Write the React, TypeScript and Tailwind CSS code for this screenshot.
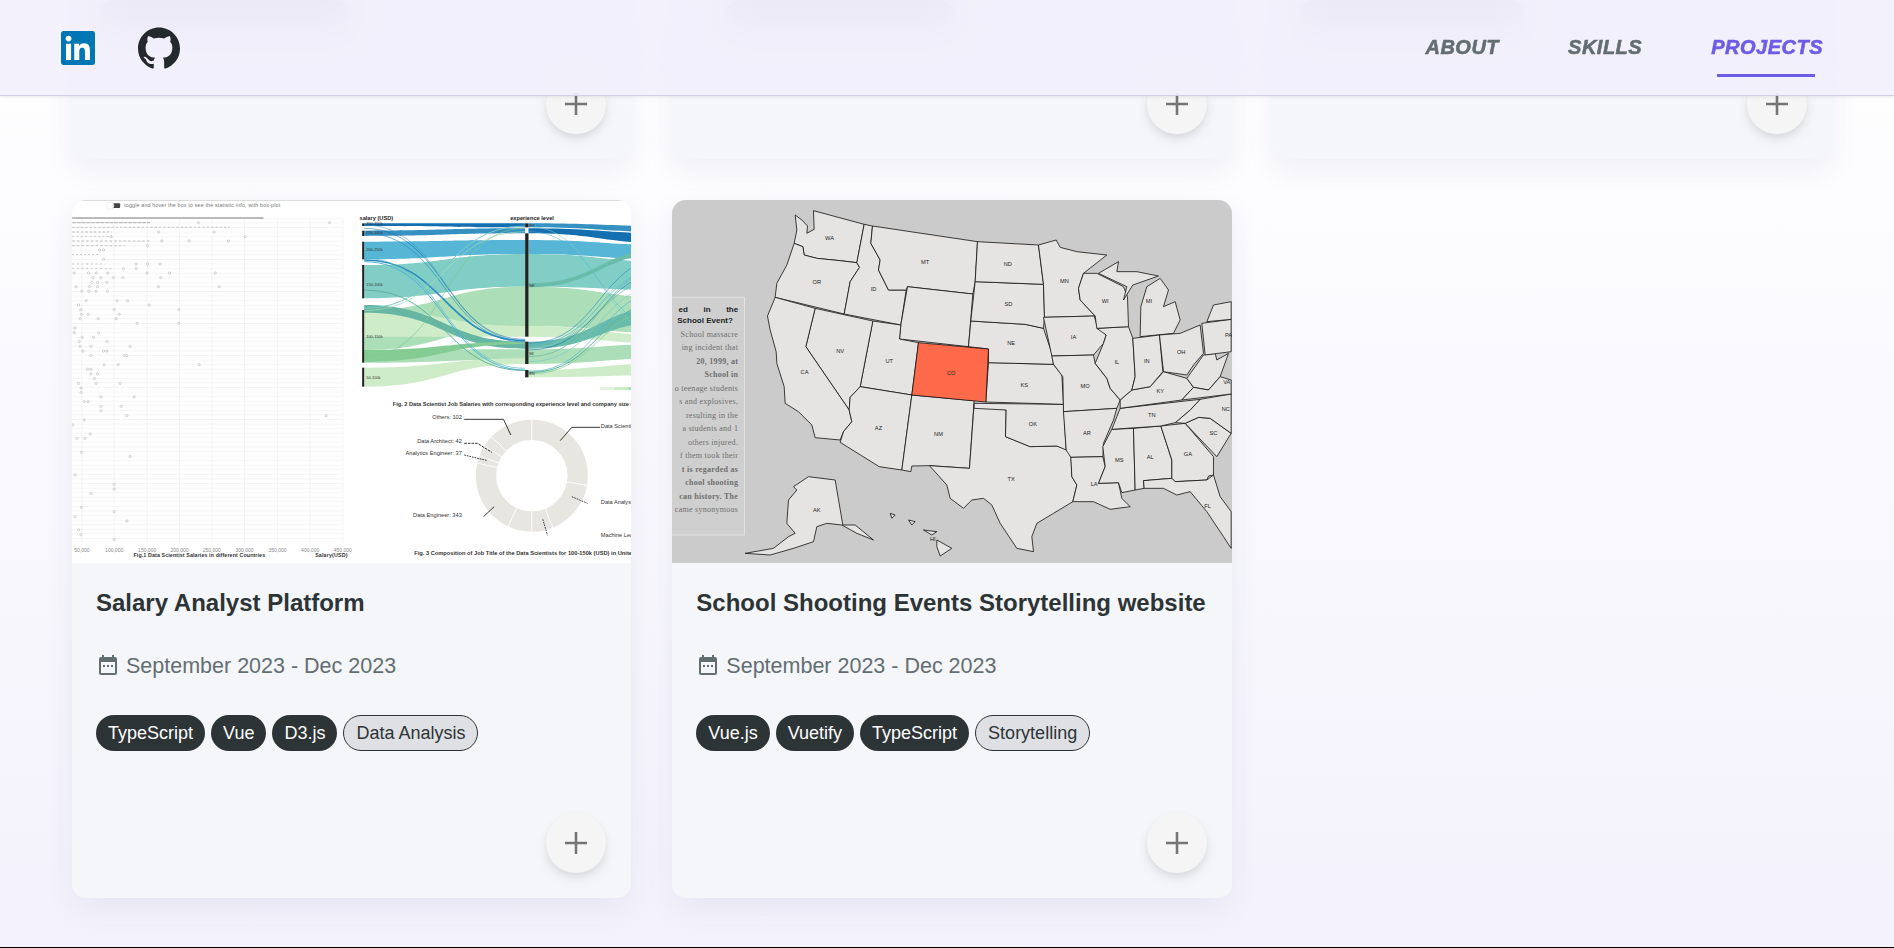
import { SiGithub, SiLinkedin } from "react-icons/si";

const sans = "'Liberation Sans', Arial, sans-serif";
const serif = "'Liberation Serif', 'Times New Roman', serif";

// chart + map are drawn in "crop units": 3 units per page px, so viewBox is 559x363 * 3
const ribbon = (x0: number, a0: number, b0: number, x1: number, a1: number, b1: number) => {
  const m = (x0 + x1) / 2;
  return `M${x0} ${a0}C${m} ${a0} ${m} ${a1} ${x1} ${a1}L${x1} ${b1}C${m} ${b1} ${m} ${b0} ${x0} ${b0}Z`;
};
const curve = (x0: number, y0: number, x1: number, y1: number) => {
  const m = (x0 + x1) / 2;
  return `M${x0} ${y0}C${m} ${y0} ${m} ${y1} ${x1} ${y1}`;
};

const leftFlows: [number, number, number, number, string][] = [
  [100, 108, 100, 112, "#0868ac"],
  [122, 138, 115, 130, "#2b8cbe"],
  [155, 208, 150, 192, "#4eb3d3"],
  [225, 325, 192, 290, "#7bccc4"],
  [360, 480, 290, 408, "#a8ddb5"],
  [480, 518, 478, 508, "#a8ddb5"],
  [533, 590, 505, 522, "#ccebc5"],
  [360, 440, 408, 440, "#ccebc5"],
  [345, 368, 455, 476, "#5fb39f"],
  [480, 515, 455, 462, "#7fc98f"],
];

const rightFlows: [number, number, number, number, string][] = [
  [100, 112, 108, 126, "#2b8cbe"],
  [115, 130, 130, 160, "#0868ac"],
  [150, 192, 165, 208, "#4eb3d3"],
  [192, 290, 215, 300, "#7bccc4"],
  [290, 408, 322, 430, "#a8ddb5"],
  [408, 440, 436, 460, "#ccebc5"],
  [455, 476, 348, 395, "#62b8a6"],
  [478, 522, 462, 505, "#a8ddb5"],
  [540, 562, 520, 556, "#ccebc5"],
  [280, 292, 175, 190, "#62b8a6"],
];

// thin strands: start y, end y, colour, width
const leftLines: [number, number, string, number][] = [
  [105, 452, "#2b8cbe", 1.5],
  [115, 448, "#0868ac", 1.5],
  [130, 456, "#2b8cbe", 2],
  [210, 452, "#2b8cbe", 5],
  [215, 540, "#4eb3d3", 3],
  [300, 542, "#5fb39f", 3],
  [205, 535, "#4eb3d3", 2],
  [355, 108, "#7bccc4", 3],
  [362, 125, "#a8ddb5", 2],
  [500, 115, "#7fc98f", 2],
];

const rightLines: [number, number, string, number][] = [
  [460, 200, "#2b8cbe", 2],
  [465, 230, "#4eb3d3", 2],
  [470, 260, "#5fb39f", 2],
  [475, 215, "#7bccc4", 2],
  [480, 245, "#0868ac", 1.5],
  [500, 230, "#5fb39f", 2],
  [515, 280, "#7bccc4", 2],
  [545, 300, "#4eb3d3", 2],
  [548, 330, "#5fb39f", 3],
  [552, 350, "#7fc98f", 2],
  [110, 440, "#7bccc4", 1.5],
  [125, 420, "#4eb3d3", 1.5],
];

const gridX = [65, 162, 261, 358, 455, 553, 652, 750, 848];
const rowY = Array.from({ length: 71 }, (_, i) => 85 + i * 13.72);
const scatter: [number, number][] = [
  [415, 98], [808, 98], [295, 126], [462, 126], [555, 140], [153, 140], [505, 153], [387, 153], [305, 153], [262, 167],
  [130, 180], [118, 180], [130, 208], [228, 222], [262, 222], [300, 222], [228, 236], [190, 236], [42, 249], [85, 249],
  [108, 249], [143, 249], [260, 249], [328, 249], [465, 249], [98, 263], [122, 263], [160, 263], [188, 263], [302, 263],
  [95, 277], [112, 277], [140, 277], [48, 290], [88, 290], [112, 290], [295, 290], [477, 290], [65, 304], [86, 304],
  [108, 304], [142, 304], [78, 332], [170, 332], [202, 332], [55, 345], [267, 345], [62, 359], [162, 359], [356, 359],
  [64, 373], [84, 373], [177, 373], [60, 386], [114, 386], [168, 386], [231, 400], [356, 400], [44, 414], [42, 428],
  [115, 428], [66, 442], [100, 442], [57, 455], [141, 455], [60, 469], [92, 469], [210, 469], [68, 483], [130, 483],
  [140, 483], [92, 497], [192, 497], [200, 497], [132, 524], [174, 524], [417, 524], [82, 538], [92, 538], [92, 552],
  [112, 552], [103, 566], [55, 580], [108, 580], [180, 580], [63, 594], [63, 607], [122, 621], [222, 621], [72, 635],
  [84, 635], [122, 649], [183, 649], [122, 662], [200, 677], [798, 677], [72, 690], [38, 705], [90, 732], [50, 745],
  [74, 745], [64, 787], [210, 800], [45, 855], [162, 883], [162, 897], [92, 911], [64, 952], [162, 965], [45, 980],
  [200, 993], [55, 1020], [62, 1034], [162, 1048],
];

const donutAngles = [0, 100, 158, 180, 205, 283, 291, 302, 314];
const rad = (d: number) => ((d - 90) * Math.PI) / 180;
const polar = (r: number, d: number) => [845 + 570 + r * Math.cos(rad(d)), 857 + r * Math.sin(rad(d))];

function SalaryImage() {
  const off = 870;
  return (
    <svg viewBox="36 30 1677 1089" className="block w-full h-full bg-white" fontFamily={sans}>
      <line x1="36" y1="31" x2="1713" y2="31" stroke="#dcdcdc" strokeWidth="4" />
      <rect x="158" y="40" width="22" height="14" rx="3" fill="#444" />
      <circle cx="150" cy="47" r="11" fill="#fff" stroke="#e2e2e2" strokeWidth="2" />
      <text x="192" y="52" fontSize="16" fill="#777" textLength="468">toggle and hover the box to see the statistic info, with box-plot</text>

      {rowY.map((y) => (
        <line key={y} x1="36" x2="848" y1={y} y2={y} stroke="#f0f0f0" strokeWidth="2" />
      ))}
      {gridX.map((x) => (
        <line key={x} x1={x} x2={x} y1="85" y2="1060" stroke="#f0f0f0" strokeWidth="2" />
      ))}
      <line x1="36" x2="610" y1="84" y2="84" stroke="#a6a6a6" strokeWidth="4" />
      <line x1="36" x2="270" y1="98" y2="98" stroke="#b0b0b0" strokeWidth="3" strokeDasharray="12 2" />
      <line x1="36" x2="510" y1="112" y2="112" stroke="#c4c4c4" strokeWidth="3" strokeDasharray="8 5" />
      <line x1="36" x2="155" y1="126" y2="126" stroke="#bcbcbc" strokeWidth="3" strokeDasharray="8 5" />
      <line x1="36" x2="155" y1="140" y2="140" stroke="#cacaca" strokeWidth="3" strokeDasharray="6 7" />
      <line x1="36" x2="270" y1="153" y2="153" stroke="#c0c0c0" strokeWidth="3" strokeDasharray="8 6" />
      <line x1="36" x2="195" y1="167" y2="167" stroke="#c4c4c4" strokeWidth="3" strokeDasharray="8 6" />
      <line x1="36" x2="118" y1="194" y2="194" stroke="#c0c0c0" strokeWidth="3" strokeDasharray="5 7" />
      <line x1="36" x2="135" y1="222" y2="222" stroke="#c8c8c8" strokeWidth="3" strokeDasharray="6 8" />
      <line x1="36" x2="160" y1="236" y2="236" stroke="#c8c8c8" strokeWidth="3" strokeDasharray="6 8" />
      {scatter.map(([x, y]) => (
        <circle key={`${x}-${y}`} cx={x} cy={y} r="3.5" fill="none" stroke="#ababab" strokeWidth="1.5" />
      ))}
      {["50,000", "100,000", "150,000", "200,000", "250,000", "300,000", "350,000", "400,000", "450,000"].map((t, i) => (
        <text key={t} x={gridX[i]} y="1086" fontSize="15" fill="#888" textAnchor="middle">{t}</text>
      ))}
      <text x="220" y="1102" fontSize="16" fontWeight="700" fill="#333" textLength="395">Fig.1 Data Scientist Salaries in different Countries</text>
      <text x="765" y="1102" fontSize="16" fontWeight="700" fill="#333" textLength="97">Salary(USD)</text>

      <g transform={`translate(${off} 0)`}>
        <text x="28" y="90" fontSize="17" fontWeight="700" fill="#222">salary (USD)</text>
        <text x="480" y="90" fontSize="17" fontWeight="700" fill="#222">experience level</text>
        <g opacity="0.95">
          {leftFlows.map(([a0, b0, a1, b1, c]) => (
            <path key={`l${a0}${a1}`} d={ribbon(42, a0, b0, 525, a1, b1)} fill={c} />
          ))}
          {rightFlows.map(([a0, b0, a1, b1, c]) => (
            <path key={`r${a0}${a1}`} d={ribbon(535, a0, b0, 960, a1, b1)} fill={c} />
          ))}
        </g>
        <g fill="none">
          {leftLines.map(([a, b, c, w]) => (
            <path key={`${a}-${b}`} d={curve(42, a, 525, b)} stroke={c} strokeWidth={w} />
          ))}
          {rightLines.map(([a, b, c, w]) => (
            <path key={`${a}-${b}`} d={curve(535, a, 960, b)} stroke={c} strokeWidth={w} />
          ))}
        </g>
        {[[100, 108], [122, 138], [155, 208], [225, 325], [360, 518], [533, 590]].map(([a, b]) => (
          <rect key={a} x="36" y={a} width="6" height={b - a} fill="#222" />
        ))}
        {[[100, 112], [130, 440], [455, 522], [540, 562]].map(([a, b]) => (
          <rect key={a} x="525" y={a} width="10" height={b - a} fill="#222" />
        ))}
        <g fontSize="12" fill="#333">
          <text x="48" y="106">300-350k</text>
          <text x="48" y="132">250-300k</text>
          <text x="48" y="184">200-250k</text>
          <text x="48" y="287">150-200k</text>
          <text x="48" y="443">100-150k</text>
          <text x="48" y="566">50-100k</text>
          <text x="537" y="110">EX</text>
          <text x="537" y="290">SE</text>
          <text x="537" y="494">MI</text>
          <text x="537" y="556">EN</text>
        </g>
        <rect x="750" y="591" width="42" height="9" fill="#e0f3db" />
        <rect x="792" y="591" width="42" height="9" fill="#ccebc5" />
        <rect x="834" y="591" width="42" height="9" fill="#a8ddb5" />
        <text x="128" y="648" fontSize="17" fontWeight="700" fill="#333" textLength="760">Fig. 2 Data Scientist Job Salaries with corresponding experience level and company size (USD)</text>
      </g>

      {/* donut */}
      <circle cx="1415" cy="857" r="137.5" fill="none" stroke="#e8e6e1" strokeWidth="61" />
      {donutAngles.map((d) => {
        const [x1, y1] = polar(105, d);
        const [x2, y2] = polar(170, d);
        return <line key={d} x1={x1} y1={y1} x2={x2} y2={y2} stroke="#fff" strokeWidth="3" />;
      })}
      <g fill="none" stroke="#111" strokeWidth="2.5">
        <path d="M1212 688H1330L1352 735" />
        <path d="M1212 760H1252L1295 787" strokeDasharray="8 3" />
        <path d="M1212 795L1282 812" strokeDasharray="5 3" />
        <path d="M1620 712H1535L1500 752" />
        <path d="M1535 920L1582 940" strokeDasharray="5 3" />
        <path d="M1448 988L1462 1036" strokeDasharray="5 3" />
        <path d="M1270 980L1302 950" />
      </g>
      <g fontSize="17" fill="#333">
        <text x="1205" y="687" textAnchor="end">Others: 102</text>
        <text x="1205" y="759" textAnchor="end">Data Architect: 42</text>
        <text x="1205" y="795" textAnchor="end">Analytics Engineer: 37</text>
        <text x="1205" y="980" textAnchor="end">Data Engineer: 343</text>
        <text x="1622" y="713">Data Scientist: 250</text>
        <text x="1622" y="941">Data Analyst: 180</text>
        <text x="1622" y="1041">Machine Learning: 80</text>
      </g>
      <text x="1062" y="1096" fontSize="17" fontWeight="700" fill="#333" textLength="720">Fig. 3 Composition of Job Title of the Data Scientists for 100-150k (USD) in United States</text>
    </svg>
  );
}

// points in crop units; anything from the right half of the map is shifted by 870
const s = (pts: string) =>
  pts
    .trim()
    .split(/\s+/)
    .map((p) => {
      const [x, y] = p.split(",").map(Number);
      return `${x + 870},${y}`;
    })
    .join(" ");

const westStates = [
  "405,75 425,90 442,108 440,130 462,118 460,62 612,103 590,218 540,212 470,205 432,195 428,170 402,160 410,120",
  "402,160 428,170 432,195 470,205 540,212 590,218 598,232 570,275 552,372 345,322 350,280 380,225",
  "612,103 637,108 632,160 660,210 655,240 685,300 738,300 722,405 552,372 570,275 598,232 590,218",
  "637,108 952,155 945,275 938,312 742,290 738,300 685,300 655,240 660,210 632,160",
  "742,290 938,312 925,470 718,447 722,405",
  "638,393 722,405 718,447 775,458 755,615 600,590",
  "465,355 638,393 600,590 570,622 567,660 437,470",
  "345,322 465,355 437,470 567,660 575,695 550,725 540,750 465,743 455,705 415,665 375,640 372,590 350,520 348,485 330,420 322,378",
  "570,622 600,590 755,615 725,840 657,830 540,757 550,725 575,695 567,660",
  "755,615 942,632 928,835 808,827 755,828 752,845 725,840",
  "400,890 445,860 525,870 548,1005 585,1005 640,1050 590,1030 545,1005 500,1000 470,1010 460,1055 400,1075 330,1095 255,1090 340,1075 385,1040 405,1030 380,1000 385,930 410,900",
  "830,1050 875,1075 840,1098 830,1070",
  "790,1020 830,1025 815,1035",
  "745,990 765,995 755,1005",
  "690,970 705,975 695,985",
];

const eastStates = [
  "72,640 168,660 166,740 240,770 320,768 362,782 365,860 380,885 368,935 310,970 260,1000 245,1040 250,1085 200,1075 150,1000 125,945 100,925 65,930 40,955 0,925 -10,885 -62,827 58,835",
  "72,640 340,643 348,780 320,768 240,770 166,740 168,660 72,655",
  "115,518 310,523 335,555 340,643 107,636",
  "62,393 225,403 280,415 305,490 310,523 115,518 115,477 55,470",
  "75,275 280,283 283,380 280,415 225,403 62,393",
  "82,155 265,165 280,283 75,275",
  "265,165 318,150 330,172 380,185 470,195 400,250 385,295 390,330 435,378 283,382 280,283",
  "280,382 432,378 440,405 468,435 460,460 430,495 305,498",
  "305,498 430,495 435,520 470,565 480,595 510,630 500,655 340,665 338,560 310,523",
  "340,665 500,655 490,690 460,760 458,800 362,802 348,780",
  "362,802 458,800 465,830 445,880 505,878 515,925 540,950 480,958 430,935 368,935 380,885 365,860",
  "485,718 550,715 555,900 515,908 505,878 445,880 465,830 458,770",
  "550,715 632,708 665,810 665,865 580,872 582,895 555,900",
  "632,708 705,700 790,800 790,855 775,858 770,870 675,875 665,865 665,810",
  "580,872 665,865 675,875 770,870 790,855 810,920 843,965 843,1075 820,1040 770,965 720,905 680,915 640,895 582,895",
  "705,700 745,682 780,685 843,730 800,800",
  "750,628 843,612 843,730 780,685 745,682 705,700 675,698 720,660",
  "510,655 750,628 720,660 675,698 632,708 485,718 500,680",
  "510,630 545,600 600,590 640,545 710,565 730,592 695,630 510,655",
  "440,415 535,410 548,445 555,560 545,600 510,630 480,595 470,565 435,520 460,460 468,435",
  "385,295 400,250 440,250 520,290 532,320 535,410 440,415 435,378 390,330",
  "445,250 505,215 500,245 560,245 625,258 548,285 520,330 530,290",
  "570,440 572,350 590,290 630,265 655,300 640,350 675,335 690,390 670,430",
  "548,445 628,435 638,545 600,590 545,600 555,560",
  "628,435 690,430 750,405 760,490 730,525 710,555 640,545",
  "710,565 760,495 795,490 800,510 835,490 810,560 775,600 730,592",
  "695,630 730,592 775,600 810,560 843,570 843,612",
  "755,400 843,388 843,485 765,495",
  "770,395 790,345 843,335 843,388",
];

const stateLabels: [number, number, string][] = [
  [508, 145, "WA"], [470, 277, "OR"], [640, 298, "ID"], [795, 215, "MT"], [540, 483, "NV"], [433, 547, "CA"], [687, 513, "UT"],
  [655, 713, "AZ"], [835, 733, "NM"], [470, 960, "AK"], [818, 1048, "HI"], [873, 550, "CO"],
];
const eastLabels: [number, number, string][] = [
  [173, 222, "ND"], [175, 343, "SD"], [183, 460, "NE"], [222, 584, "KS"], [248, 702, "OK"], [183, 866, "TX"], [343, 272, "MN"],
  [370, 440, "IA"], [405, 588, "MO"], [410, 728, "AR"], [432, 882, "LA"], [465, 332, "WI"], [596, 332, "MI"], [500, 515, "IL"],
  [590, 513, "IN"], [693, 485, "OH"], [630, 604, "KY"], [605, 675, "TN"], [507, 810, "MS"], [600, 800, "AL"], [713, 793, "GA"],
  [790, 730, "SC"], [827, 656, "NC"], [830, 576, "VA"], [835, 436, "PA"], [772, 948, "FL"],
];

const storyLines: [string, number, boolean][] = [
  ["School massacre", 433, false],
  ["ing incident that", 473, false],
  ["20, 1999, at", 514, true],
  ["School in", 554, true],
  ["o teenage students", 595, false],
  ["s and explosives,", 635, false],
  ["resulting in the", 676, false],
  ["a students and 1", 716, false],
  ["others injured.", 756, false],
  ["f them took their", 796, false],
  ["t is regarded as", 837, true],
  ["chool shooting", 878, true],
  ["can history. The", 918, true],
  ["came synonymous", 959, false],
];

function MapImage() {
  return (
    <svg viewBox="36 30 1677 1089" className="block w-full h-full bg-[#cbcbcb]" fontFamily={sans}>
      <g fill="#e5e4e2" stroke="#111" strokeWidth="2.4" strokeLinejoin="round">
        {westStates.map((p) => (
          <polygon key={p} points={p} />
        ))}
        {eastStates.map((p) => (
          <polygon key={p} points={s(p)} />
        ))}
        <polygon points="775,458 985,477 977,636 755,615" fill="#ff6b4a" />
      </g>
      <g fontSize="17" fill="#222" textAnchor="middle">
        {stateLabels.map(([x, y, t]) => (
          <text key={t} x={x} y={y + 6}>{t}</text>
        ))}
        {eastLabels.map(([x, y, t]) => (
          <text key={t} x={x + 870} y={y + 6}>{t}</text>
        ))}
      </g>
      <rect x="20" y="322" width="233" height="713" fill="#cfcfcf" stroke="#e3e3e3" strokeWidth="3" />
      <g textAnchor="end" fill="#222">
        <text x="234" y="366" fontSize="24" fontWeight="700" wordSpacing="40">ed in the</text>
        <text x="218" y="400" fontSize="24" fontWeight="700">School Event?</text>
      </g>
      <g textAnchor="end" fontFamily={serif} fontSize="24" fill="#6e6e6e">
        {storyLines.map(([t, y, bold]) => (
          <text key={y} x="234" y={y + 8} fontWeight={bold ? 700 : 400} letterSpacing="0.8">{t}</text>
        ))}
      </g>
    </svg>
  );
}

function Chip({ label, outlined }: { label: string; outlined?: boolean }) {
  return (
    <span
      className={
        outlined
          ? "h-9 flex items-center px-3 rounded-full text-[18px] border border-[#2d3436] bg-[#dfe0e4] text-[#2d3436]"
          : "h-9 flex items-center px-3 rounded-full text-[18px] bg-[#2d3436] text-white"
      }
    >
      {label}
    </span>
  );
}

function CalendarIcon() {
  return (
    <svg viewBox="0 0 24 24" className="w-[24px] h-[24px] text-[#636e72]" fill="currentColor">
      <path d="M19 3A2 2 0 0 1 21 5V19A2 2 0 0 1 19 21H5C3.89 21 3 20.1 3 19V5A2 2 0 0 1 5 3H6V1H8V3H16V1H18V3H19M19 19V8H5V19H19M7 11H9V13H7V11M11 11H13V13H11V11M15 11H17V13H15V11Z" />
    </svg>
  );
}

function PlusButton() {
  return (
    <button className="absolute right-[25px] bottom-[25px] w-[60px] h-[60px] rounded-full bg-[#f5f5f5] flex items-center justify-center shadow-[0_4px_8px_-1px_rgba(0,0,0,0.08),0_6px_14px_0_rgba(0,0,0,0.06)]">
      <svg viewBox="0 0 24 24" className="w-[22px] h-[22px]">
        <path d="M10.6 0H13.4V10.6H24V13.4H13.4V24H10.6V13.4H0V10.6H10.6Z" fill="#757575" />
      </svg>
    </button>
  );
}

type Project = {
  title?: string;
  date?: string;
  tags?: string[];
  extra?: string;
  image?: React.ReactNode;
  hidden?: { left: number; width: number };
};

// first row is scrolled behind the header, only its blurred tags show through
const projects: Project[] = [
  { hidden: { left: 28, width: 250 } },
  { hidden: { left: 53, width: 230 } },
  { hidden: { left: 27, width: 224 } },
  {
    title: "Salary Analyst Platform",
    date: "September 2023 - Dec 2023",
    tags: ["TypeScript", "Vue", "D3.js"],
    extra: "Data Analysis",
    image: <SalaryImage />,
  },
  {
    title: "School Shooting Events Storytelling website",
    date: "September 2023 - Dec 2023",
    tags: ["Vue.js", "Vuetify", "TypeScript"],
    extra: "Storytelling",
    image: <MapImage />,
  },
];

function Card({ project }: { project: Project }) {
  return (
    <div className="relative h-[698px] rounded-[14px] overflow-hidden bg-[#f5f6fa] shadow-[0_10px_30px_rgba(60,60,110,0.07)]">
      {project.image ? <div className="h-[363px]">{project.image}</div> : <div className="h-[539px]" />}
      {project.title && (
        <div className="px-6">
          <h3 className="mt-[24px] text-[24px] leading-[32px] font-bold whitespace-nowrap text-[#2d3436]">{project.title}</h3>
          <div className="mt-[31px] flex items-center gap-[6px] text-[21.5px] leading-[32px] text-[#636e72]">
            <CalendarIcon />
            <span>{project.date}</span>
          </div>
          <div className="mt-[33px] flex gap-[6px]">
            {project.tags?.map((t) => <Chip key={t} label={t} />)}
            {project.extra && <Chip label={project.extra} outlined />}
          </div>
        </div>
      )}
      {project.hidden && (
        <div
          className="h-[30px] rounded-full bg-[#6f7480] opacity-30"
          style={{ marginLeft: project.hidden.left, width: project.hidden.width }}
        />
      )}
      <PlusButton />
    </div>
  );
}

export default function App() {
  return (
    <div className="relative h-[948px] overflow-hidden bg-gradient-to-b from-white to-[#f3f2fc]" style={{ fontFamily: sans }}>
      <main className="-mt-[539px] pl-[72px] pr-[62px] grid grid-cols-3 gap-[41px]">
        {projects.map((p, i) => (
          <Card key={i} project={p} />
        ))}
      </main>
      <footer className="mt-[49px] border-t border-black h-[40px]" />

      <header className="absolute top-0 inset-x-0 h-[96px] border-b border-[#d0cee2] bg-[#f1effc]/85 backdrop-blur-lg shadow-[0_1px_3px_rgba(0,0,0,0.08)] flex items-center justify-between pl-[61px] pr-[71px]">
        <div className="flex items-center gap-[43px]">
          <span className="w-[34px] h-[34px] bg-white rounded-[3px] flex">
            <SiLinkedin className="w-[34px] h-[34px] text-[#0077b5]" />
          </span>
          <SiGithub className="w-[42px] h-[42px] text-[#24292e]" />
        </div>
        <nav className="flex items-start gap-[69px] -mt-[2px] text-[20px] italic font-bold uppercase tracking-[0.5px] leading-[24px] text-[#636e72] [-webkit-text-stroke:0.6px_currentColor]">
          <span>About</span>
          <span>Skills</span>
          <div className="relative text-[#6c5ce7]">
            <span>Projects</span>
            <div className="absolute left-[6px] right-[8px] top-[39px] h-[3px] bg-[#6c5ce7]" />
          </div>
        </nav>
      </header>
    </div>
  );
}
